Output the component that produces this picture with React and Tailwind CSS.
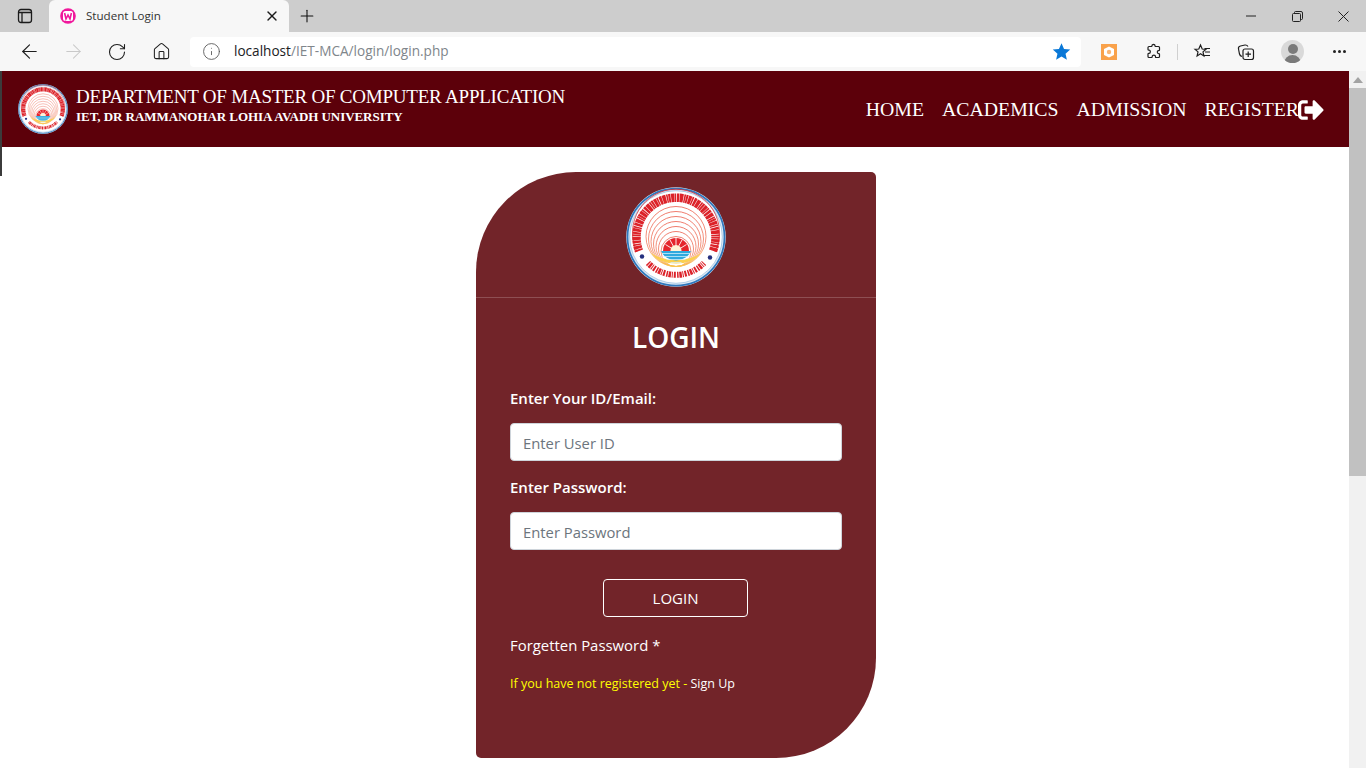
import React from "react";
import { ArrowLeft, ArrowRight, RotateCw, Home, Info, Plus, X } from "lucide-react";
import { FaSignOutAlt } from "react-icons/fa";

const ui = { fontFamily: '"Open Sans","Noto Sans",sans-serif' };
const serif = { fontFamily: '"Liberation Serif",serif' };

function Seal({ size, id }) {
  const rings = [60, 55, 50, 45, 40, 35, 30];
  return (
    <svg width={size} height={size} viewBox="0 0 200 200" className="block shrink-0">
      <defs>
        <linearGradient id={id} x1="0" y1="0" x2="0" y2="1">
          <stop offset="0" stopColor="#e8432f" />
          <stop offset="0.65" stopColor="#ef6a4a" />
          <stop offset="1" stopColor="#f9c64f" />
        </linearGradient>
      </defs>
      <circle cx="100" cy="100" r="99.500" fill="#dbe9f5" />
      <circle cx="100" cy="100" r="97" fill="none" stroke="#2f78bd" strokeWidth="3.500" />
      <circle cx="100" cy="100" r="92.500" fill="#fff" stroke="#7fb0da" strokeWidth="1.200" />
      <path d="M26 128 A79 79 0 1 1 174 128" fill="none" stroke="#dc2229" strokeWidth="17" strokeDasharray="4 1 6 .8 3 1.500 5 1 7 1.200 3 .8" />
      <path d="M22 130 A87 87 0 1 1 178 130" fill="none" stroke="#dc2229" strokeWidth="1.500" />
      <path d="M44 152 A78 78 0 0 0 156 152" fill="none" stroke="#dc2229" strokeWidth="12" strokeDasharray="3 1.500 5 1.500 2 2 4 2.500" />
      <circle cx="32" cy="139" r="4.500" fill="#24307f" />
      <circle cx="168" cy="141" r="4.500" fill="#24307f" />
      {rings.map((r) => (
        <circle key={r} cx="100" cy={159 - r} r={r} fill="none" stroke={`url(#${id})`} strokeWidth="1.400" />
      ))}
      <path d="M50 132 A54 34 0 0 0 150 132 A58 28 0 0 1 50 132 Z" fill="#fbd04f" />
      <path d="M74 128 A26 26 0 0 1 126 128 Z" fill="#e5252c" />
      <g stroke="#fff" strokeWidth="1.800">
        <path d="M100 102V128M88 106L100 128M112 106L100 128M79 115L100 128M121 115L100 128" />
      </g>
      <circle cx="100" cy="127" r="11" fill="#fff4d8" />
      <path d="M70 128 H130 A32 29 0 0 1 70 128 Z" fill="#2ea9de" />
      <path d="M72 133 H128 M75 139 H125 M81 145 H119 M89 151 H111" stroke="#d6f1fb" strokeWidth="1.500" />
    </svg>
  );
}

function Chrome() {
  return (
    <div style={ui} className="shrink-0">
      <div className="h-[32px] bg-[#cdcdcd] flex items-end">
        <div className="w-[49px] h-[32px] flex items-center justify-center">
          <svg width="16" height="16" viewBox="0 0 16 16" fill="none" stroke="#1b1b1b" strokeWidth="1.300">
            <rect x="1.500" y="1.500" width="13" height="13" rx="2.500" />
            <path d="M1.500 4.500H14.500M5 4.500V14.500" />
          </svg>
        </div>
        <div className="w-[240px] h-[32px] bg-[#f7f7f7] rounded-t-[6px] flex items-center pl-[11px] pr-[9px]">
          <svg width="16" height="16" viewBox="0 0 16 16" className="shrink-0">
            <circle cx="8" cy="8" r="7.800" fill="#f0189c" />
            <rect x="3" y="3" width="10" height="10" rx="2.500" fill="#fff" />
            <path d="M4.600 5 L6 11 L8 7 L10 11 L11.400 5" fill="none" stroke="#f0189c" strokeWidth="1.600" />
          </svg>
          <span className="ml-[10px] text-[11.600px] text-[#333] flex-1">Student Login</span>
          <X size={16} strokeWidth={2} className="text-[#1b1b1b]" />
        </div>
        <div className="w-[34px] h-[32px] flex items-center justify-center ml-px">
          <Plus size={20} strokeWidth={1.300} className="text-[#111]" />
        </div>
        <div className="flex-1" />
        <div className="flex h-[32px] text-[#222]">
          <div className="w-[46px] flex items-center justify-center">
            <svg width="10" height="10" viewBox="0 0 10 10" stroke="#222" strokeWidth="1"><path d="M0 5H10" /></svg>
          </div>
          <div className="w-[46px] flex items-center justify-center">
            <svg width="11" height="11" viewBox="0 0 11 11" fill="none" stroke="#222" strokeWidth="1">
              <rect x="0.500" y="2.500" width="8" height="8" rx="1" />
              <path d="M2.500 2.500V1.500Q2.500 .5 3.500 .5H9Q10.500 .5 10.500 2V7.500Q10.500 8.500 9.500 8.500H8.500" />
            </svg>
          </div>
          <div className="w-[46px] flex items-center justify-center">
            <svg width="11" height="11" viewBox="0 0 11 11" stroke="#222" strokeWidth="1"><path d="M.5 .5L10.500 10.500M10.500 .5L.5 10.500" /></svg>
          </div>
        </div>
      </div>
      <div className="h-[39px] bg-[#f7f7f7] flex items-center relative">
        <div className="w-[190px] flex items-center text-[#1e1e1e]">
          <ArrowLeft size={23} strokeWidth={1.200} className="ml-[18px]" />
          <ArrowRight size={23} strokeWidth={1.100} className="ml-[21px] text-[#c9c9c9]" />
          <RotateCw size={20} strokeWidth={1.300} className="ml-[22px]" />
          <Home size={19} strokeWidth={1.300} className="ml-[25px]" />
        </div>
        <div className="w-[891px] h-[30px] bg-white rounded-[4px] flex items-center pl-[12px] pr-[11px]">
          <Info size={19} strokeWidth={1.100} className="text-[#555]" />
          <span className="ml-[13px] text-[13.600px] text-[#80868b] flex-1">
            <span className="text-[#202124]">localhost</span>/IET-MCA/login/login.php
          </span>
          <svg width="19" height="19" viewBox="0 0 24 24" fill="#0a78d7" className="-mr-px">
            <path d="M12 1.500l3.200 7.200 7.800.8-5.900 5.200 1.700 7.700L12 18.400l-6.800 4 1.700-7.700L1 9.500l7.800-.8z" />
          </svg>
        </div>
        <div className="flex items-center ml-[20px] text-[#1e1e1e]">
          <div className="w-[16px] h-[16px] bg-[#f9a24b] flex items-center justify-center">
            <svg width="12" height="12" viewBox="0 0 12 12"><path d="M6 .5L11 3v6L6 11.500 1 9V3z" fill="#fff" /><circle cx="6" cy="6" r="2.200" fill="#f9b777" /></svg>
          </div>
          <svg width="18" height="18" viewBox="0 0 18 18" fill="none" stroke="#1e1e1e" strokeWidth="1.200" className="ml-[28px]">
            <path d="M7 2.500c0-1.400 3-1.400 3 0 0 .6 0 1 .5 1H13.500a1 1 0 0 1 1 1V7c0 .6-.5.600-1 .6-1.600 0-1.600 3 0 3 .5 0 1 0 1 .6v2.300a1 1 0 0 1-1 1H11c-.6 0-.5-.5-.5-1 0-1.800-3.300-1.800-3.300 0 0 .5 0 1-.5 1H4a1 1 0 0 1-1-1V11c0-.5.400-.6 1-.6 1.800 0 1.800-3.300 0-3.300-.6 0-1-.1-1-.6V4.500a1 1 0 0 1 1-1h2.500C7 3.500 7 3 7 2.500z" />
          </svg>
          <div className="w-px h-[16px] bg-[#d0d0d0] ml-[14px]" />
          <svg width="18" height="18" viewBox="0 0 18 18" fill="none" stroke="#1e1e1e" strokeWidth="1.200" className="ml-[15px]">
            <path d="M7.500 2l1.700 4 3.800.3-3 2.600.9 4-3.400-2.100-3.400 2.100.9-4-3-2.600 3.800-.3z" />
            <path d="M11.500 5.500H17M12 9H17M11 12.500H17" />
          </svg>
          <svg width="18" height="18" viewBox="0 0 18 18" fill="none" stroke="#1e1e1e" strokeWidth="1.200" className="ml-[26px]">
            <path d="M5 13.500Q3 13 2.500 11L1.500 6Q1 3.500 3.500 3L8 2Q10 1.800 11 3.500" />
            <rect x="6" y="6" width="10.500" height="10.500" rx="2" />
            <path d="M11.200 8.500V14M8.500 11.200H14" />
          </svg>
          <div className="w-[23px] h-[23px] rounded-full bg-[#d9d9d9] ml-[26px] overflow-hidden flex flex-col items-center">
            <div className="w-[10px] h-[10px] rounded-full bg-[#7a7a7a] mt-[4px] shrink-0" />
            <div className="w-[17px] h-[10px] rounded-t-full bg-[#7a7a7a] mt-px shrink-0" />
          </div>
          <div className="flex gap-[2px] ml-[29px]">
            <i className="block w-[3px] h-[3px] rounded-full bg-[#222]" />
            <i className="block w-[3px] h-[3px] rounded-full bg-[#222]" />
            <i className="block w-[3px] h-[3px] rounded-full bg-[#222]" />
          </div>
        </div>
      </div>
    </div>
  );
}

function Field({ label, placeholder }) {
  return (
    <>
      <label className="block text-[15px] font-semibold text-white leading-[22px]">{label}</label>
      <input
        type="text"
        placeholder={placeholder}
        className="block w-full h-[38px] mt-[14px] mb-[15px] bg-white border border-[#ced4da] rounded-[4px] px-[12px] pt-[2px] text-[14.800px] placeholder:text-[#6c757d] outline-none"
      />
    </>
  );
}

export default function App() {
  return (
    <div className="w-[1366px] h-[768px] overflow-hidden flex flex-col bg-white">
      <Chrome />
      <div className="flex flex-1 min-h-0">
        <div className="w-[2px] shrink-0 flex flex-col">
          <div className="h-[105px] bg-[#3b3b3b]" />
        </div>
        <div className="flex-1 min-w-0 flex flex-col">
          <header className="h-[76px] bg-[#5c000a] flex items-center pl-[16px] shrink-0 text-white" style={serif}>
            <Seal size={50} id="sealA" />
            <div className="ml-[8px] -mt-[8px]">
              <div className="text-[19px] leading-[23px] tracking-[-0.220px]">DEPARTMENT OF MASTER OF COMPUTER APPLICATION</div>
              <div className="text-[13px] leading-[17px] font-bold tracking-[-0.050px]">IET, DR RAMMANOHAR LOHIA AVADH UNIVERSITY</div>
            </div>
            <nav className="ml-auto mr-[25px] mt-[2px] flex items-center text-[19.800px] gap-[18px]">
              <span>HOME</span>
              <span>ACADEMICS</span>
              <span>ADMISSION</span>
              <span className="flex items-center">REGISTER<FaSignOutAlt size={26} className="-ml-[1px]" /></span>
            </nav>
          </header>
          <main className="flex justify-center pt-[25px]" style={ui}>
            <div className="w-[400px] h-[586px] bg-[#722429] rounded-tl-[100px] rounded-br-[100px] rounded-tr-[5px] rounded-bl-[5px] text-white ml-[1px]">
              <div className="h-[126px] pt-[15px] flex justify-center border-b border-white/20">
                <Seal size={100} id="sealB" />
              </div>
              <div className="px-[34px]">
                <h1 className="text-[28px] font-semibold text-center leading-[38px] mt-[20px] mb-[31px]">LOGIN</h1>
                <Field label="Enter Your ID/Email:" placeholder="Enter User ID" />
                <Field label="Enter Password:" placeholder="Enter Password" />
                <div className="flex justify-center mt-[29px]">
                  <button className="w-[145px] h-[38px] mr-[1px] border border-white rounded-[4px] text-[15px] text-white">LOGIN</button>
                </div>
                <p className="text-[14.900px] leading-[24px] mt-[16px]">Forgetten Password *</p>
                <p className="text-[12.500px] leading-[18px] mt-[18px]"><span className="text-[#ffff00]">If you have not registered yet - </span>Sign Up</p>
              </div>
            </div>
          </main>
        </div>
        <div className="w-[17px] shrink-0 bg-[#f1f1f1] flex flex-col items-center">
          <svg width="10" height="6" viewBox="0 0 10 6" className="mt-[6px]"><path d="M5 0l5 6H0z" fill="#a3a3a3" /></svg>
          <div className="w-full h-[388px] bg-[#c1c1c1] mt-[5px]" />
        </div>
      </div>
    </div>
  );
}
